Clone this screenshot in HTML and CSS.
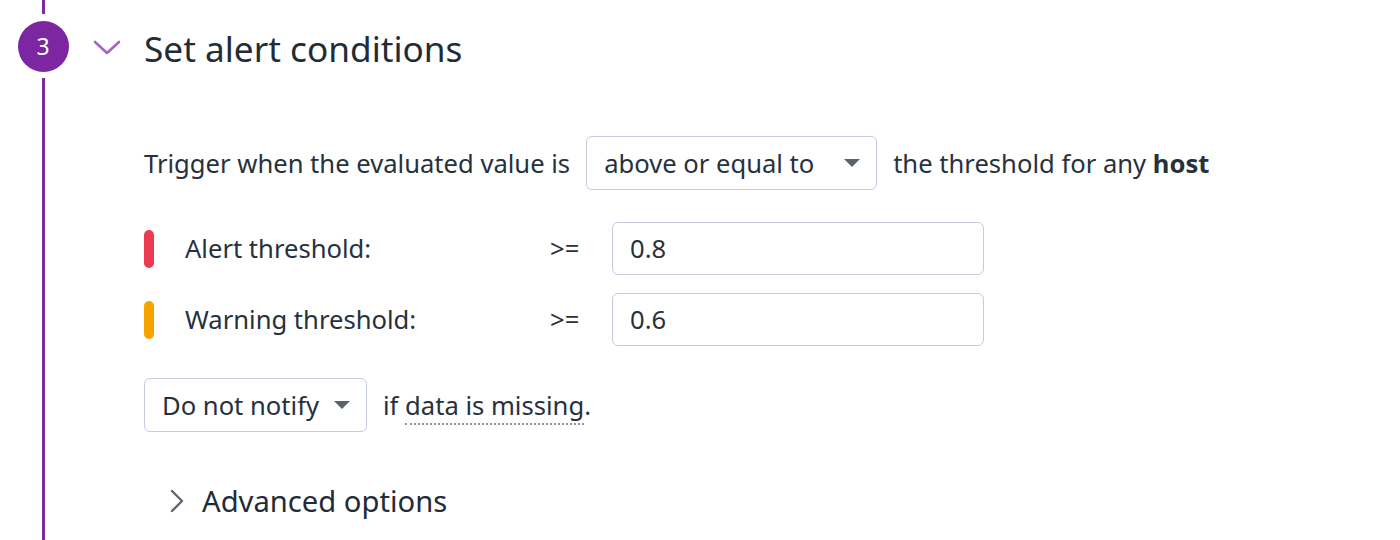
FILE: index.html
```html
<!DOCTYPE html>
<html>
<head>
<meta charset="utf-8">
<link rel="stylesheet" href="styles.css">
</head>
<body>
<div class="page">
  <div class="rail">
    <div class="rail-line rail-top"></div>
    <div class="step">3</div>
    <div class="rail-line rail-rest"></div>
  </div>
  <div class="main">
    <div class="header">
      <svg class="chev-down" width="28" height="16" viewBox="0 0 28 16"><path d="M2 2 L14 13 L26 2" fill="none" stroke="#a761c9" stroke-width="2.6" stroke-linecap="round" stroke-linejoin="round"/></svg>
      <h2 class="title">Set alert conditions</h2>
    </div>
    <div class="content">
      <div class="trigger">
        <span>Trigger when the evaluated value is</span>
        <div class="select select-wide"><span>above or equal to</span><span class="caret"></span></div>
        <span>the threshold for any <b>host</b></span>
      </div>
      <div class="thresholds">
        <div class="th-row">
          <span class="bar bar-alert"></span>
          <span class="th-label">Alert threshold:</span>
          <span class="th-op">&gt;=</span>
          <div class="input">0.8</div>
        </div>
        <div class="th-row">
          <span class="bar bar-warn"></span>
          <span class="th-label">Warning threshold:</span>
          <span class="th-op">&gt;=</span>
          <div class="input">0.6</div>
        </div>
      </div>
      <div class="missing">
        <div class="select select-small"><span>Do not notify</span><span class="caret"></span></div>
        <span>if <span class="dotted">data is missing</span>.</span>
      </div>
      <div class="advanced">
        <svg class="chev-right" width="16" height="24" viewBox="0 0 16 24"><path d="M3 2 L13 12 L3 22" fill="none" stroke="#5f666f" stroke-width="2.4" stroke-linecap="round" stroke-linejoin="round"/></svg>
        <span class="adv-text">Advanced options</span>
      </div>
    </div>
  </div>
</div>
</body>
</html>
```
FILE: styles.css
```css
html, body {
  margin: 0;
  padding: 0;
  background: #ffffff;
}
body {
  font-family: "Noto Sans", "Open Sans", sans-serif;
  color: #27313c;
}
.page {
  display: flex;
  height: 540px;
  overflow: hidden;
}
.rail {
  width: 86px;
  flex: none;
  display: flex;
  flex-direction: column;
  align-items: center;
}
.rail-line {
  width: 3px;
  background: #7d2ba3;
}
.rail-top {
  height: 14px;
}
.rail-rest {
  flex: 1;
}
.step {
  width: 51px;
  height: 51px;
  border-radius: 50%;
  background: #7d26a1;
  color: #ffffff;
  font-size: 23px;
  line-height: 1;
  display: flex;
  align-items: center;
  justify-content: center;
  margin: 7px 0 6px;
}
.main {
  flex: 1;
  display: flex;
  flex-direction: column;
}
.header {
  height: 96px;
  display: flex;
  align-items: center;
}
.chev-down {
  margin-left: 7px;
  margin-right: 23px;
}
.title {
  margin: 0;
  font-size: 35.2px;
  font-weight: 400;
  color: #222c36;
}
.content {
  padding-left: 58px;
  font-size: 25.6px;
}
.trigger {
  margin-top: 40px;
  height: 54px;
  display: flex;
  align-items: center;
  gap: 16px;
  white-space: nowrap;
}
.select {
  box-sizing: border-box;
  height: 54px;
  border: 1.5px solid #c5cbe0;
  border-radius: 6px;
  display: flex;
  align-items: center;
  justify-content: space-between;
  padding: 0 16px 0 17px;
}
.select-wide {
  width: 291px;
}
.select-small {
  width: 223px;
}
.caret {
  width: 0;
  height: 0;
  border-left: 8px solid transparent;
  border-right: 8px solid transparent;
  border-top: 8px solid #5d636d;
}
.thresholds {
  margin-top: 32px;
  display: flex;
  flex-direction: column;
  gap: 18px;
}
.th-row {
  display: grid;
  grid-template-columns: 41px 365px 62px 372px;
  align-items: center;
  height: 53px;
}
.bar {
  width: 10px;
  height: 38px;
  border-radius: 5px;
}
.bar-alert {
  background: #ec3a50;
}
.bar-warn {
  background: #f8a200;
}
.input {
  box-sizing: border-box;
  height: 53px;
  border: 1.5px solid #c5cbe0;
  border-radius: 6px;
  display: flex;
  align-items: center;
  padding-left: 17px;
}
.missing {
  margin-top: 32px;
  height: 54px;
  display: flex;
  align-items: center;
  gap: 16px;
}
.dotted {
  border-bottom: 2px dotted #8e97a8;
  padding-bottom: 0;
}
.advanced {
  margin-top: 49px;
  height: 40px;
  display: flex;
  align-items: center;
  padding-left: 25px;
}
.chev-right {
  margin-right: 17px;
}
.adv-text {
  font-size: 29.2px;
  color: #222c36;
}
```
